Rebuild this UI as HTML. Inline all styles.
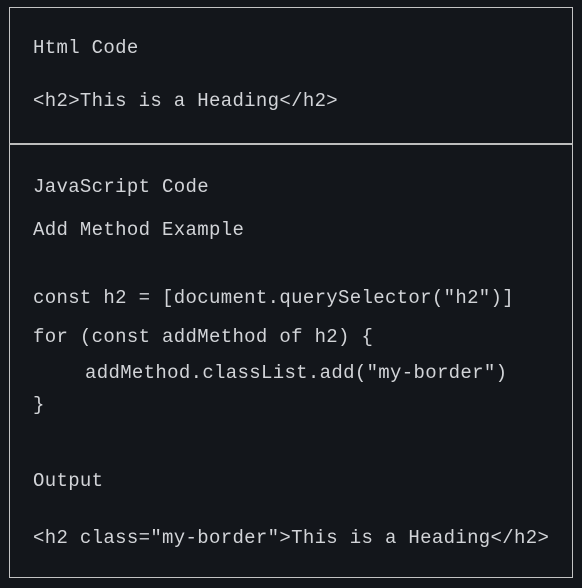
<!DOCTYPE html>
<html><head><style>
html,body{margin:0;padding:0;background:#13161b;width:582px;height:588px;overflow:hidden}
.box{position:absolute;left:9px;top:7px;width:562px;height:569px;border:1.5px solid #c4c4c4;box-sizing:content-box}
.div{position:absolute;left:9px;top:143px;width:564px;height:2px;background:#bdbdbd}
.t{position:absolute;font-family:"Liberation Mono","DejaVu Sans Mono",monospace;font-size:19px;letter-spacing:0.33px;color:#d2d4d8;white-space:pre;line-height:22px}
</style></head><body>
<div class="box"></div>
<div class="div"></div>
<div class="t" style="left:33px;top:37px">Html Code</div>
<div class="t" style="left:33px;top:90px">&lt;h2&gt;This is a Heading&lt;/h2&gt;</div>
<div class="t" style="left:33px;top:176px">JavaScript Code</div>
<div class="t" style="left:33px;top:219px">Add Method Example</div>
<div class="t" style="left:33px;top:287px">const h2 = [document.querySelector("h2")]</div>
<div class="t" style="left:33px;top:326px">for (const addMethod of h2) {</div>
<div class="t" style="left:85px;top:362px">addMethod.classList.add("my-border")</div>
<div class="t" style="left:33px;top:394px">}</div>
<div class="t" style="left:33px;top:470px">Output</div>
<div class="t" style="left:33px;top:527px">&lt;h2 class="my-border"&gt;This is a Heading&lt;/h2&gt;</div>
</body></html>
